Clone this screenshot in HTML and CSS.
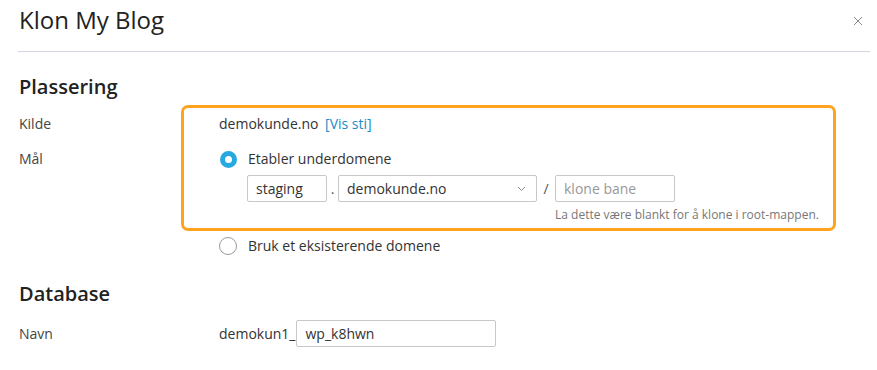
FILE: index.html
```html
<!DOCTYPE html>
<html>

<head>
    <meta name="viewport" content="width=device-width, initial-scale=1">
    <title>Klon My Blog</title>

    <link rel="stylesheet" href="styles.css">

</head>

<body>
    <div class="dialog">
        <div class="dialog-header">
            <h1 class="title">Klon My Blog</h1>
            <svg class="close" width="10" height="10" viewBox="0 0 10 10">
                <path d="M1 1 L9 9 M9 1 L1 9" stroke="#8a8a8a" stroke-width="1"/>
            </svg>
        </div>

        <div class="section location">
            <div class="highlight"></div>
            <h2 class="section-title">Plassering</h2>

            <div class="field field-source">
                <div class="field-label">Kilde</div>
                <div class="field-value">demokunde.no <a class="link">[Vis sti]</a></div>
            </div>

            <div class="field field-target">
                <div class="field-label">Mål</div>
                <div class="field-value">
                    <label class="radio">
                        <span class="radio-mark checked"></span>
                        Etabler underdomene
                    </label>

                    <div class="subdomain">
                        <div class="input input-sub">staging</div>
                        <span class="sep">.</span>
                        <div class="input select">
                            demokunde.no
                            <svg class="chevron" width="9" height="6" viewBox="0 0 9 6">
                                <path d="M1 1 L4.5 4.5 L8 1" fill="none" stroke="#8a8a8a" stroke-width="1"/>
                            </svg>
                        </div>
                        <span class="sep sep-slash">/</span>
                        <div class="path">
                            <div class="input input-path placeholder">klone bane</div>
                            <div class="hint">La dette være blankt for å klone i root-mappen.</div>
                        </div>
                    </div>

                    <label class="radio radio-existing">
                        <span class="radio-mark"></span>
                        Bruk et eksisterende domene
                    </label>
                </div>
            </div>
        </div>

        <div class="section database">
            <h2 class="section-title">Database</h2>

            <div class="field field-db">
                <div class="field-label">Navn</div>
                <div class="field-value db-value">
                    <span class="prefix">demokun1_</span>
                    <div class="input input-db">wp_k8hwn</div>
                </div>
            </div>
        </div>
    </div>
</body>

</html>
```

FILE: styles.css
```css
body {
    margin: 0;
    background-color: #fff;
    font-family: "Open Sans", "Liberation Sans", sans-serif;
    font-size: 14px;
    color: #333;
}

.dialog {
    width: 877px;
}

.dialog-header {
    display: flex;
    justify-content: space-between;
    align-items: flex-start;
    margin: 0 7px 0 18px;
    padding: 3px 0 15px 1px;
    border-bottom: 1px solid #d6d6e0;
}

.title {
    margin: 0;
    font-size: 24px;
    font-weight: 400;
    line-height: 33px;
    color: #222;
}

.close {
    margin: 13px 7px 0 0;
}

.section {
    position: relative;
    padding-left: 19px;
}

.location {
    margin-top: 21px;
}

.database {
    margin-top: 24px;
}

.section-title {
    margin: 0;
    font-size: 20px;
    font-weight: 600;
    line-height: 28px;
    color: #222;
}

/* orange highlight drawn over the target fields */
.highlight {
    position: absolute;
    left: 181px;
    top: 32px;
    width: 649px;
    height: 120px;
    border: 3px solid #ffa31f;
    border-radius: 7px;
    pointer-events: none;
}

.field {
    display: grid;
    grid-template-columns: 200px 1fr;
    line-height: 20px;
}

.field-label {
    color: #444;
}

.field-source {
    margin-top: 13px;
}

.field-target {
    margin-top: 15px;
}

.link {
    margin-left: 3px;
    color: #1a8cc6;
}

.radio {
    display: flex;
    align-items: center;
    gap: 11px;
}

.radio-mark {
    box-sizing: border-box;
    width: 18px;
    height: 18px;
    border: 1px solid #9a9a9a;
    border-radius: 50%;
    background-color: #fff;
}

.radio-mark.checked {
    width: 17px;
    height: 17px;
    margin-left: 1px;
    border: 5px solid #26a8e0;
}

.radio-existing {
    margin-top: 13px;
}

.subdomain {
    display: flex;
    align-items: flex-start;
    margin-top: 6px;
    margin-left: 28px;
}

.input {
    box-sizing: border-box;
    height: 27px;
    padding: 0 8px;
    border: 1px solid #c8c8c8;
    border-radius: 2px;
    line-height: 25px;
    color: #333;
    background-color: #fff;
}

.input-sub {
    width: 80px;
}

.sep {
    width: 11px;
    text-align: center;
    line-height: 27px;
    color: #555;
}

.sep-slash {
    width: 18px;
}

.select {
    position: relative;
    width: 199px;
}

.chevron {
    position: absolute;
    right: 10px;
    top: 10px;
}

.input-path {
    width: 120px;
}

.placeholder {
    color: #999;
}

.hint {
    margin-top: 5px;
    font-size: 12px;
    line-height: 16px;
    color: #777;
    white-space: nowrap;
}

.field-db {
    margin-top: 12px;
    align-items: center;
}

.db-value {
    display: flex;
    align-items: center;
}

.input-db {
    width: 200px;
    margin-left: 1px;
}
```
